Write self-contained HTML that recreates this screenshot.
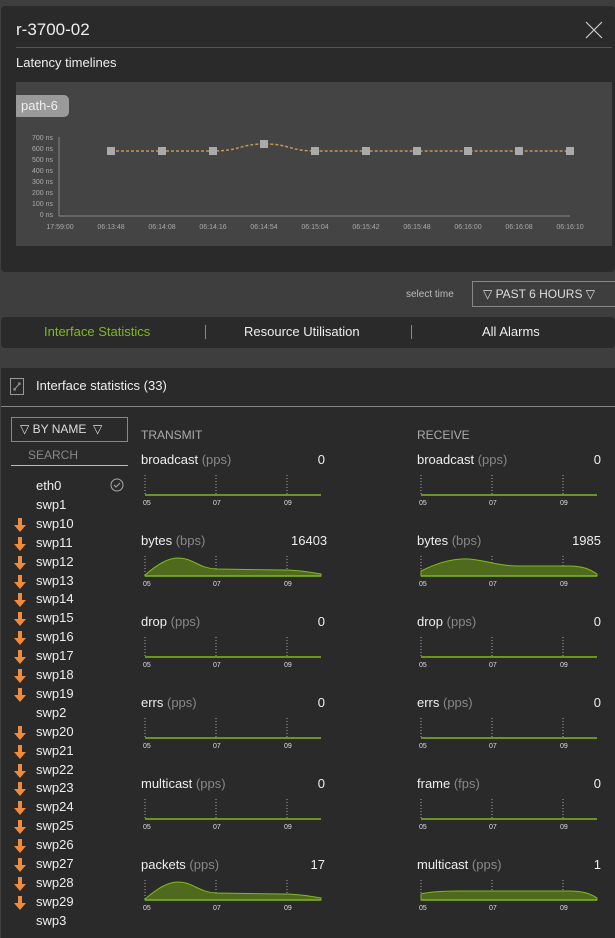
<!DOCTYPE html>
<html><head><meta charset="utf-8"><style>
*{margin:0;padding:0;box-sizing:border-box}
body{width:615px;height:936px;background:#3e3e3e;font-family:"Liberation Sans",sans-serif;color:#eee;position:relative;overflow:hidden}
.a{position:absolute}
.p{background:#2a2a2a}
.g{color:#888}
.row{position:absolute;font-size:13px;color:#eee}
.lst{position:absolute;left:36px;font-size:13px;color:#eee}
.ar{position:absolute;left:14px;width:12px;height:14px}
</style></head><body>
<div class="a p" style="left:1px;top:6px;width:614px;height:266px;border-radius:4px"></div>
<div class="a" style="left:16px;top:20px;font-size:17px">r-3700-02</div>
<svg class="a" style="left:585px;top:21px" width="18" height="18"><path d="M1 1L17 17M17 1L1 17" stroke="#ccc" stroke-width="1.2"/></svg>
<div class="a" style="left:16px;top:47px;width:596px;height:1px;background:#555"></div>
<div class="a" style="left:16px;top:55px;font-size:13px">Latency timelines</div>
<div class="a" style="left:16px;top:82px;width:596px;height:164px;background:#444"></div>
<div class="a" style="left:16px;top:95px;width:53px;height:22px;background:#9a9a9a;border-radius:0 5px 5px 0;color:#eee;font-size:13px;line-height:22px;padding-left:5px">path-6</div>
<svg class="a" style="left:0;top:0" width="615" height="260" font-size="7" fill="#aaa" font-family="Liberation Sans">
<line x1="59" y1="137" x2="59" y2="216" stroke="#888"/>
<line x1="59" y1="216" x2="570" y2="216" stroke="#888"/>
<g text-anchor="end"><text x="53" y="140">700 ns</text><text x="53" y="151">600 ns</text><text x="53" y="162">500 ns</text><text x="53" y="173">400 ns</text><text x="53" y="184">300 ns</text><text x="53" y="195">200 ns</text><text x="53" y="206">100 ns</text><text x="53" y="217">0 ns</text></g>
<g text-anchor="middle"><text x="60" y="229">17:59:00</text><text x="111" y="229">06:13:48</text><text x="162" y="229">06:14:08</text><text x="213" y="229">06:14:16</text><text x="264" y="229">06:14:54</text><text x="315" y="229">06:15:04</text><text x="366" y="229">06:15:42</text><text x="417" y="229">06:15:48</text><text x="468" y="229">06:16:00</text><text x="519" y="229">06:16:08</text><text x="570" y="229">06:16:10</text></g>
<path d="M111 151L213 151C240 151 240 144 264 144C290 144 290 151 315 151L570 151" stroke="#c8945a" stroke-width="1.5" stroke-dasharray="3 2" fill="none"/>
<g fill="#aaa"><rect x="107" y="147" width="8" height="8"/><rect x="158" y="147" width="8" height="8"/><rect x="209" y="147" width="8" height="8"/><rect x="260" y="140" width="8" height="8"/><rect x="311" y="147" width="8" height="8"/><rect x="362" y="147" width="8" height="8"/><rect x="413" y="147" width="8" height="8"/><rect x="464" y="147" width="8" height="8"/><rect x="515" y="147" width="8" height="8"/><rect x="566" y="147" width="8" height="8"/></g>
</svg>
<div class="a" style="left:406px;top:289px;font-size:10px;color:#bbb">select time</div>
<div class="a" style="left:472px;top:281px;width:145px;height:26px;border:1px solid #888;font-size:12px;color:#ddd;line-height:24px;padding-left:10px">▽ PAST 6 HOURS ▽</div>
<div class="a p" style="left:1px;top:317px;width:614px;height:31px;border-radius:4px"></div>
<div class="a" style="left:44px;top:324px;font-size:13px;color:#7fba1c">Interface Statistics</div>
<div class="a" style="left:205px;top:325px;width:1px;height:14px;background:#888"></div>
<div class="a" style="left:244px;top:324px;font-size:13px">Resource Utilisation</div>
<div class="a" style="left:411px;top:325px;width:1px;height:14px;background:#888"></div>
<div class="a" style="left:482px;top:324px;font-size:13px">All Alarms</div>
<div class="a p" style="left:1px;top:368px;width:614px;height:570px"></div>
<svg class="a" style="left:10px;top:378px" width="14" height="17"><rect x="0.5" y="0.5" width="13" height="16" stroke="#999" fill="none"/><path d="M4 12L10 5M8 5h2v2M4 10v2h2" stroke="#999" fill="none"/></svg>
<div class="a" style="left:36px;top:378px;font-size:13px">Interface statistics (33)</div>
<div class="a" style="left:1px;top:406px;width:614px;height:1px;background:#888"></div>
<div class="a" style="left:11px;top:417px;width:117px;height:25px;border:1px solid #888;font-size:12px;color:#ddd;line-height:23px;padding-left:8px">▽ BY NAME &nbsp;▽</div>
<div class="a" style="left:28px;top:448px;font-size:12px;color:#888">SEARCH</div>
<div class="a" style="left:11px;top:465px;width:117px;height:1px;background:#bbb"></div>
<svg class="a" style="left:110px;top:478px" width="14" height="14"><circle cx="7" cy="7" r="6" stroke="#aaa" fill="none"/><path d="M4 7l2 2 4-4" stroke="#aaa" fill="none"/></svg>
<div id="L"></div>
<div class="a" style="left:141px;top:428px;font-size:12px;color:#aaa">TRANSMIT</div>
<div class="a" style="left:417px;top:428px;font-size:12px;color:#aaa">RECEIVE</div>
<div id="C"></div>
<script>
var n=["eth0","swp1","swp10","swp11","swp12","swp13","swp14","swp15","swp16","swp17","swp18","swp19","swp2","swp20","swp21","swp22","swp23","swp24","swp25","swp26","swp27","swp28","swp29","swp3"];
var h="";n.forEach(function(s,i){var y=478+i*18.9;h+='<div class="lst" style="top:'+y+'px">'+s+'</div>';
if(i>1&&s!="swp2"&&s!="swp3")h+='<svg class="ar" style="top:'+(y+2)+'px" width="12" height="14"><path d="M4 0h4v7h4l-6 7-6-7h4z" fill="#f08a3c"/></svg>';});
document.getElementById("L").innerHTML=h;
var T=[["broadcast","pps","0",0],["bytes","bps","16403",1],["drop","pps","0",0],["errs","pps","0",0],["multicast","pps","0",0],["packets","pps","17",1]];
var R=[["broadcast","pps","0",0],["bytes","bps","1985",2],["drop","pps","0",0],["errs","pps","0",0],["frame","fps","0",0],["multicast","pps","1",3]];
var c="";
function blk(x,y,d){var s='<div class="row" style="left:'+x+'px;top:'+y+'px">'+d[0]+' <span class="g">('+d[1]+')</span></div><div class="row" style="left:'+(x+150)+'px;top:'+y+'px;width:34px;text-align:right">'+d[2]+'</div>';
s+='<svg class="a" style="left:'+(x+2)+'px;top:'+(y+21)+'px" width="182" height="40" font-size="7" fill="#ddd" font-family="Liberation Sans">';
[2,73,144].forEach(function(gx){s+='<line x1="'+gx+'" y1="2" x2="'+gx+'" y2="22" stroke="#aaa" stroke-dasharray="1 2"/>';});
var p={1:"M2 21C15 10 25 4 35 4C50 4 55 14 73 15L140 16C160 16 170 19 178 20L178 22L2 22Z",2:"M2 17C20 8 35 4 50 5C70 7 80 12 100 12L150 12C165 12 172 16 178 20L178 22L2 22Z",3:"M2 16C10 14 20 13 40 13L150 13C165 13 172 16 178 20L178 22L2 22Z"}[d[3]];
if(p)s+='<path d="'+p+'" fill="#4f6a1c" stroke="#7fba1c"/>';
s+='<line x1="2" y1="22" x2="178" y2="22" stroke="#7fba1c" stroke-width="1.5"/>';
s+='<text x="0" y="32">05</text><text x="70" y="32">07</text><text x="141" y="32">09</text></svg>';return s;}
for(var i=0;i<6;i++){c+=blk(141,452+i*81,T[i]);c+=blk(417,452+i*81,R[i]);}
document.getElementById("C").innerHTML=c;
</script>
</body></html>
